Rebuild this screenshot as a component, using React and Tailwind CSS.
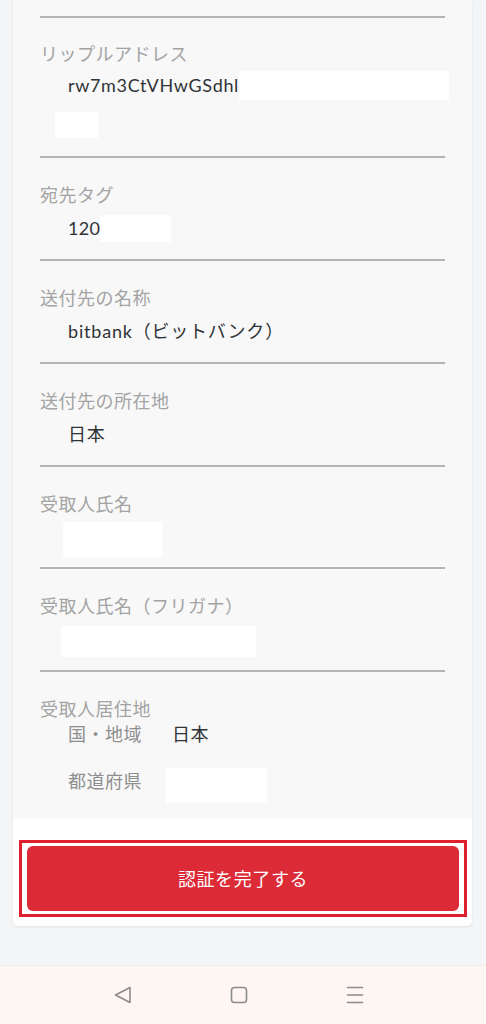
import React from "react";

function Line() {
  return <div className="h-[2px] bg-[#b4b4b4]" />;
}

function Label({ children, mt = "mt-[26px]" }) {
  return (
    <div className={`${mt} h-[22px] leading-[22px] text-[18px] tracking-[0.5px] text-[#a3a3a3] whitespace-nowrap`}>
      {children}
    </div>
  );
}

function TextSection({ label, value }) {
  return (
    <div>
      <Line />
      <Label>{label}</Label>
      <div className="mt-[7px] h-[30px] leading-[30px] pl-[28px] text-[18px] tracking-[0.8px] text-[#2f3337] whitespace-nowrap">
        {value}
      </div>
      <div className="h-[16px]" />
    </div>
  );
}

export default function App() {
  return (
    <div className="h-[1024px] flex flex-col bg-[#f4f5f7] font-['Lato','Noto_Sans_CJK_JP',sans-serif] overflow-hidden">
      <div className="flex-1 pl-[13px] pr-[14px]">
        <div className="bg-white rounded-b-[5px] shadow-[0_1px_3px_rgba(0,0,0,0.08)]">
          <div className="bg-[#f8f8f8] px-[27px] pt-[16px] pb-[16px]">
            {/* リップルアドレス */}
            <div>
              <Line />
              <Label mt="mt-[25px]">リップルアドレス</Label>
              <div className="mt-[5px] h-[30px] flex items-center pl-[28px]">
                <span className="text-[18px] tracking-[0.65px] text-[#2f3337] leading-[30px]">rw7m3CtVHwGSdhl</span>
                <div className="h-[29px] flex-1 bg-white -mr-[4px]" />
              </div>
              <div className="mt-[12px] ml-[15px] w-[43px] h-[26px] bg-white" />
              <div className="h-[18px]" />
            </div>

            {/* 宛先タグ */}
            <div>
              <Line />
              <Label>宛先タグ</Label>
              <div className="mt-[7px] h-[30px] flex items-center pl-[28px]">
                <span className="text-[18px] tracking-[0.3px] text-[#2f3337] leading-[30px]">120</span>
                <div className="w-[71px] h-[27px] bg-white" />
              </div>
              <div className="h-[16px]" />
            </div>

            <TextSection label="送付先の名称" value="bitbank（ビットバンク）" />
            <TextSection label="送付先の所在地" value="日本" />

            {/* 受取人氏名 */}
            <div>
              <Line />
              <Label>受取人氏名</Label>
              <div className="mt-[7px] ml-[23px] w-[99px] h-[35px] bg-white" />
              <div className="h-[10px]" />
            </div>

            {/* 受取人氏名（フリガナ） */}
            <div>
              <Line />
              <Label>受取人氏名（フリガナ）</Label>
              <div className="mt-[9px] ml-[21px] w-[195px] h-[31px] bg-white" />
              <div className="h-[13px]" />
            </div>

            {/* 受取人居住地 */}
            <div>
              <Line />
              <Label>受取人居住地</Label>
              <div className="mt-[3px] h-[22px] leading-[22px] flex pl-[28px] text-[18px] tracking-[0.5px] whitespace-nowrap">
                <span className="w-[104px] text-[#8e8e8e]">国・地域</span>
                <span className="text-[#2f3337]">日本</span>
              </div>
              <div className="mt-[23px] flex items-start pl-[28px]">
                <span className="w-[98px] leading-[26px] text-[18px] tracking-[0.5px] text-[#8e8e8e] whitespace-nowrap">都道府県</span>
                <div className="w-[101px] h-[35px] bg-white" />
              </div>
            </div>
          </div>

          <div className="pt-[21px] pb-[9px] pl-[6px] pr-[5px]">
            <div className="border-[3px] border-[#e1202f] px-[5px] py-[3px]">
              <div className="h-[65px] rounded-[6px] bg-[#dc2a37] flex items-center justify-center text-white text-[18px] tracking-[0.6px] font-['Noto_Sans_CJK_JP',sans-serif]">
                認証を完了する
              </div>
            </div>
          </div>
        </div>
      </div>

      <div className="h-[59px] shrink-0 bg-[#fdf6f3] border-t border-[#efebe8] flex items-center pl-[114px] gap-[98px]">
        <svg width="18" height="18" viewBox="0 0 18 18" fill="none" stroke="#8c8c8c" strokeWidth="1.6" strokeLinejoin="round">
          <path d="M16 1.5 L1.5 9 L16 16.5 Z" />
        </svg>
        <svg width="18" height="18" viewBox="0 0 18 18" fill="none" stroke="#8c8c8c" strokeWidth="1.6">
          <rect x="1.5" y="1.5" width="15" height="15" rx="3" />
        </svg>
        <svg width="18" height="18" viewBox="0 0 18 18" fill="none" stroke="#8c8c8c" strokeWidth="1.6" strokeLinecap="round">
          <path d="M1.5 1.5 H16.5 M1.5 9 H16.5 M1.5 16.5 H16.5" />
        </svg>
      </div>
    </div>
  );
}
